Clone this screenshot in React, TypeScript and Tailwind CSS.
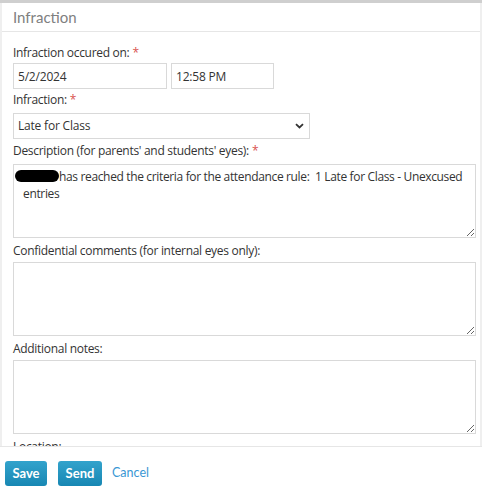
import React from "react";

const labelCls = "block h-[20px] leading-[20px] text-[12px] tracking-[-0.3px] text-[#333] font-['Open_Sans',sans-serif]";
const inputCls = "h-[26px] border border-[#d9d9d9] bg-white px-[4px] text-[12px] tracking-[-0.2px] text-[#333] font-['Open_Sans',sans-serif] outline-none";
const taCls = "block w-[463px] h-[74px] border border-[#d9d9d9] bg-white px-[9px] py-[3px] text-[12px] tracking-[-0.35px] leading-[17px] text-[#333] font-['Open_Sans',sans-serif] outline-none";

function Req() {
  return <span className="text-[#d9534f] ml-[3px]">*</span>;
}

export default function App() {
  return (
    <div className="w-[482px] h-[500px] bg-white flex flex-col overflow-hidden">
      <div className="h-[3px] bg-[#cfcfcf]" />
      <div className="flex-1 flex flex-col border-l-2 border-r-2 border-[#efefef] min-h-0">
        <div className="h-[29px] border-b border-[#e6e6e6] px-[11px] flex items-center">
          <span className="text-[15px] text-[#808080] font-['Lato',sans-serif]">Infraction</span>
        </div>
        <div className="flex-1 min-h-0 overflow-hidden px-[11px] pt-[11px]">
          <label className={labelCls}>
            Infraction occured on:<Req />
          </label>
          <div className="flex gap-[4px]">
            <input className={inputCls + " w-[154px]"} defaultValue="5/2/2024" />
            <input className={inputCls + " w-[103px]"} defaultValue="12:58 PM" />
          </div>
          <label className={labelCls + " mt-[1px]"}>
            Infraction:<Req />
          </label>
          <div className="relative w-[297px] h-[26px] mt-[3px] border border-[#d9d9d9] bg-white flex items-center px-[4px]">
            <span className="text-[12px] tracking-[-0.2px] text-[#333] font-['Open_Sans',sans-serif]">Late for Class</span>
            <svg className="absolute right-[5px] top-[9px]" width="9" height="6" viewBox="0 0 9 6">
              <path d="M1 1.2 L4.5 4.5 L8 1.2" fill="none" stroke="#333" strokeWidth="1.8" />
            </svg>
          </div>
          <label className={labelCls + " mt-[2px]"}>
            Description (for parents' and students' eyes):<Req />
          </label>
          <div className="relative mt-[3px]">
            <textarea
              className={taCls + " resize-y indent-[36px]"}
              defaultValue={"has reached the criteria for the attendance rule:  1 Late for Class - Unexcused entries"}
            />
            <span className="absolute left-[2px] top-[6px] w-[44px] h-[12px] rounded-full bg-black" />
          </div>
          <label className={labelCls + " mt-[3px]"}>Confidential comments (for internal eyes only):</label>
          <textarea className={taCls + " mt-[1px] resize-y"} />
          <label className={labelCls + " mt-[3px]"}>Additional notes:</label>
          <textarea className={taCls + " mt-[1px] resize-y"} />
          <label className={labelCls + " mt-[3px]"}>Location:</label>
          <div className="w-[297px] h-[26px] mt-[3px] border border-[#d9d9d9]" />
        </div>
      </div>
      <div className="h-[54px] border-t border-[#e6e6e6] flex items-start pt-[14px] pl-[5px] gap-[11px] bg-white">
        <button className="w-[42px] h-[25px] rounded-[3px] bg-gradient-to-b from-[#32a3cc] to-[#1787b3] text-white text-[13px] font-bold font-['Lato',sans-serif]">
          Save
        </button>
        <button className="w-[44px] h-[25px] rounded-[3px] bg-gradient-to-b from-[#32a3cc] to-[#1787b3] text-white text-[13px] font-bold font-['Lato',sans-serif]">
          Send
        </button>
        <button className="h-[25px] ml-[-1px] text-[#3a97d4] text-[12.5px] font-['Lato',sans-serif]">Cancel</button>
      </div>
    </div>
  );
}
